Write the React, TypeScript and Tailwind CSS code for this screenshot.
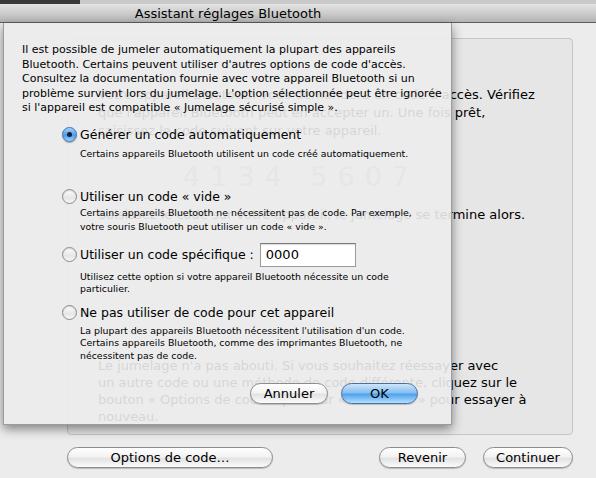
import React from 'react'

function Radio({ checked }: { checked?: boolean }) {
  if (checked) {
    return (
      <span className="relative flex h-[15px] w-[15px] shrink-0 items-center justify-center rounded-full border border-[#3f6fae] bg-[linear-gradient(to_bottom,#a9d2f7,#4f9be6_55%,#9fd4ff)] shadow-[0_1px_1px_rgba(0,0,0,0.3)]">
        <span className="h-[5px] w-[5px] rounded-full bg-[#13233a]" />
      </span>
    )
  }
  return (
    <span className="h-[15px] w-[15px] shrink-0 rounded-full border border-[#8b8b8b] bg-[linear-gradient(to_bottom,#fdfdfd,#e6e6e6_60%,#f7f7f7)] shadow-[inset_0_1px_1px_rgba(0,0,0,0.15)]" />
  )
}

function AquaButton({ label, className, blue }: { label: string; className: string; blue?: boolean }) {
  const skin = blue
    ? 'border-[#4d6f9c] bg-[linear-gradient(to_bottom,#cfe6fb,#86bff2_45%,#52a3ec_55%,#b3dfff)]'
    : 'border-[#8c8c8c] bg-[linear-gradient(to_bottom,#ffffff,#f3f3f3_45%,#e3e3e3_55%,#fafafa)]'
  return (
    <div className={`flex items-center justify-center rounded-full border text-[13px] text-black shadow-[0_1px_1px_rgba(0,0,0,0.2)] ${skin} ${className}`}>
      {label}
    </div>
  )
}

export default function App() {
  return (
    <div className="relative h-[478px] w-[596px] overflow-hidden bg-[#ececec] font-['DejaVu_Sans','Liberation_Sans',sans-serif] text-black">
      {/* window behind */}
      <div className="flex h-[4px]">
        <div className="w-[80px] bg-[#3a3a3a]" />
        <div className="flex-1 bg-[#c9c9c9]" />
      </div>
      <div className="flex h-[19px] items-center justify-center border-b border-[#5e5e5e] bg-[linear-gradient(to_bottom,#e4e4e4,#b4b4b4)] pr-[140px] text-[13px] leading-none">
        Assistant réglages Bluetooth
      </div>

      <div className="ml-[67px] mt-[15px] h-[397px] w-[506px] rounded-[4px] border border-[#c6c6c6] bg-[#e6e6e6] pl-[30px] pt-[47px] text-[13px] leading-[18px]">
        <div className="whitespace-nowrap">
          Votre appareil Bluetooth vous demandera un code d'accès. Vérifiez
          <br />
          que l'appareil Bluetooth peut en accepter un. Une fois prêt,
          <br />
          saisissez le code suivant sur votre appareil.
        </div>
        <div className="ml-[85px] mt-[19px] whitespace-nowrap text-[27px] leading-[36px] tracking-[10px] text-[#a8a8a8]">
          4134 5607
        </div>
        <div className="mt-[11px] whitespace-nowrap">
          Saisissez le code sur votre appareil, le jumelage se termine alors.
        </div>
        <div className="mt-[133px] whitespace-nowrap leading-[17px]">
          Le jumelage n'a pas abouti. Si vous souhaitez réessayer avec
          <br />
          un autre code ou une méthode de code différente, cliquez sur le
          <br />
          bouton « Options de code » puis sur « Continuer » pour essayer à
          <br />
          nouveau.
        </div>
      </div>

      <div className="mt-[12px] flex h-[21px] items-stretch">
        <AquaButton label="Options de code…" className="ml-[67px] w-[206px]" />
        <AquaButton label="Revenir" className="ml-[106px] w-[87px]" />
        <AquaButton label="Continuer" className="ml-[17px] w-[90px]" />
      </div>

      {/* sheet */}
      <div className="absolute left-[3px] top-[23px] flex h-[402px] w-[449px] flex-col border-x border-b border-[#9c9c9c] bg-[#ececec]/[0.9] pl-[18px] pt-[20px] shadow-[0_4px_10px_rgba(0,0,0,0.45)]">
        <p className="whitespace-nowrap text-[11px] leading-[14.6px]">
          Il est possible de jumeler automatiquement la plupart des appareils
          <br />
          Bluetooth. Certains peuvent utiliser d'autres options de code d'accès.
          <br />
          Consultez la documentation fournie avec votre appareil Bluetooth si un
          <br />
          problème survient lors du jumelage. L'option sélectionnée peut être ignorée
          <br />
          si l'appareil est compatible « Jumelage sécurisé simple ».
        </p>

        <div className="ml-[40px] mt-[11px] flex flex-col">
          <div className="flex h-[16px] items-center gap-[3px]">
            <Radio checked />
            <span className="text-[12.5px]">Générer un code automatiquement</span>
          </div>
          <div className="ml-[18px] mt-[4px] whitespace-nowrap text-[9.4px] leading-[13px]">
            Certains appareils Bluetooth utilisent un code créé automatiquement.
          </div>

          <div className="mt-[29px] flex h-[16px] items-center gap-[3px]">
            <Radio />
            <span className="text-[12.5px]">Utiliser un code « vide »</span>
          </div>
          <div className="ml-[18px] mt-[1px] whitespace-nowrap text-[9.4px] leading-[14px]">
            Certains appareils Bluetooth ne nécessitent pas de code. Par exemple,
            <br />
            votre souris Bluetooth peut utiliser un code « vide ».
          </div>

          <div className="mt-[9px] flex h-[24px] items-center gap-[3px]">
            <Radio />
            <span className="text-[12.5px]">Utiliser un code spécifique :</span>
            <div className="ml-[3px] flex h-[24px] w-[96px] items-center border border-[#9a9a9a] border-t-[#7a7a7a] bg-white pl-[5px] text-[13px] shadow-[inset_0_1px_1px_rgba(0,0,0,0.15)]">
              0000
            </div>
          </div>
          <div className="ml-[18px] mt-[4px] whitespace-nowrap text-[9.4px] leading-[12px]">
            Utilisez cette option si votre appareil Bluetooth nécessite un code
            <br />
            particulier.
          </div>

          <div className="mt-[10px] flex h-[16px] items-center gap-[3px]">
            <Radio />
            <span className="text-[12.5px]">Ne pas utiliser de code pour cet appareil</span>
          </div>
          <div className="ml-[18px] mt-[4px] whitespace-nowrap text-[9.4px] leading-[12.5px]">
            La plupart des appareils Bluetooth nécessitent l'utilisation d'un code.
            <br />
            Certains appareils Bluetooth, comme des imprimantes Bluetooth, ne
            <br />
            nécessitent pas de code.
          </div>
        </div>

        <div className="mt-[21px] flex h-[21px] items-stretch">
          <AquaButton label="Annuler" className="ml-[228px] w-[78px]" />
          <AquaButton label="OK" blue className="ml-[13px] w-[77px]" />
        </div>
      </div>
    </div>
  )
}
